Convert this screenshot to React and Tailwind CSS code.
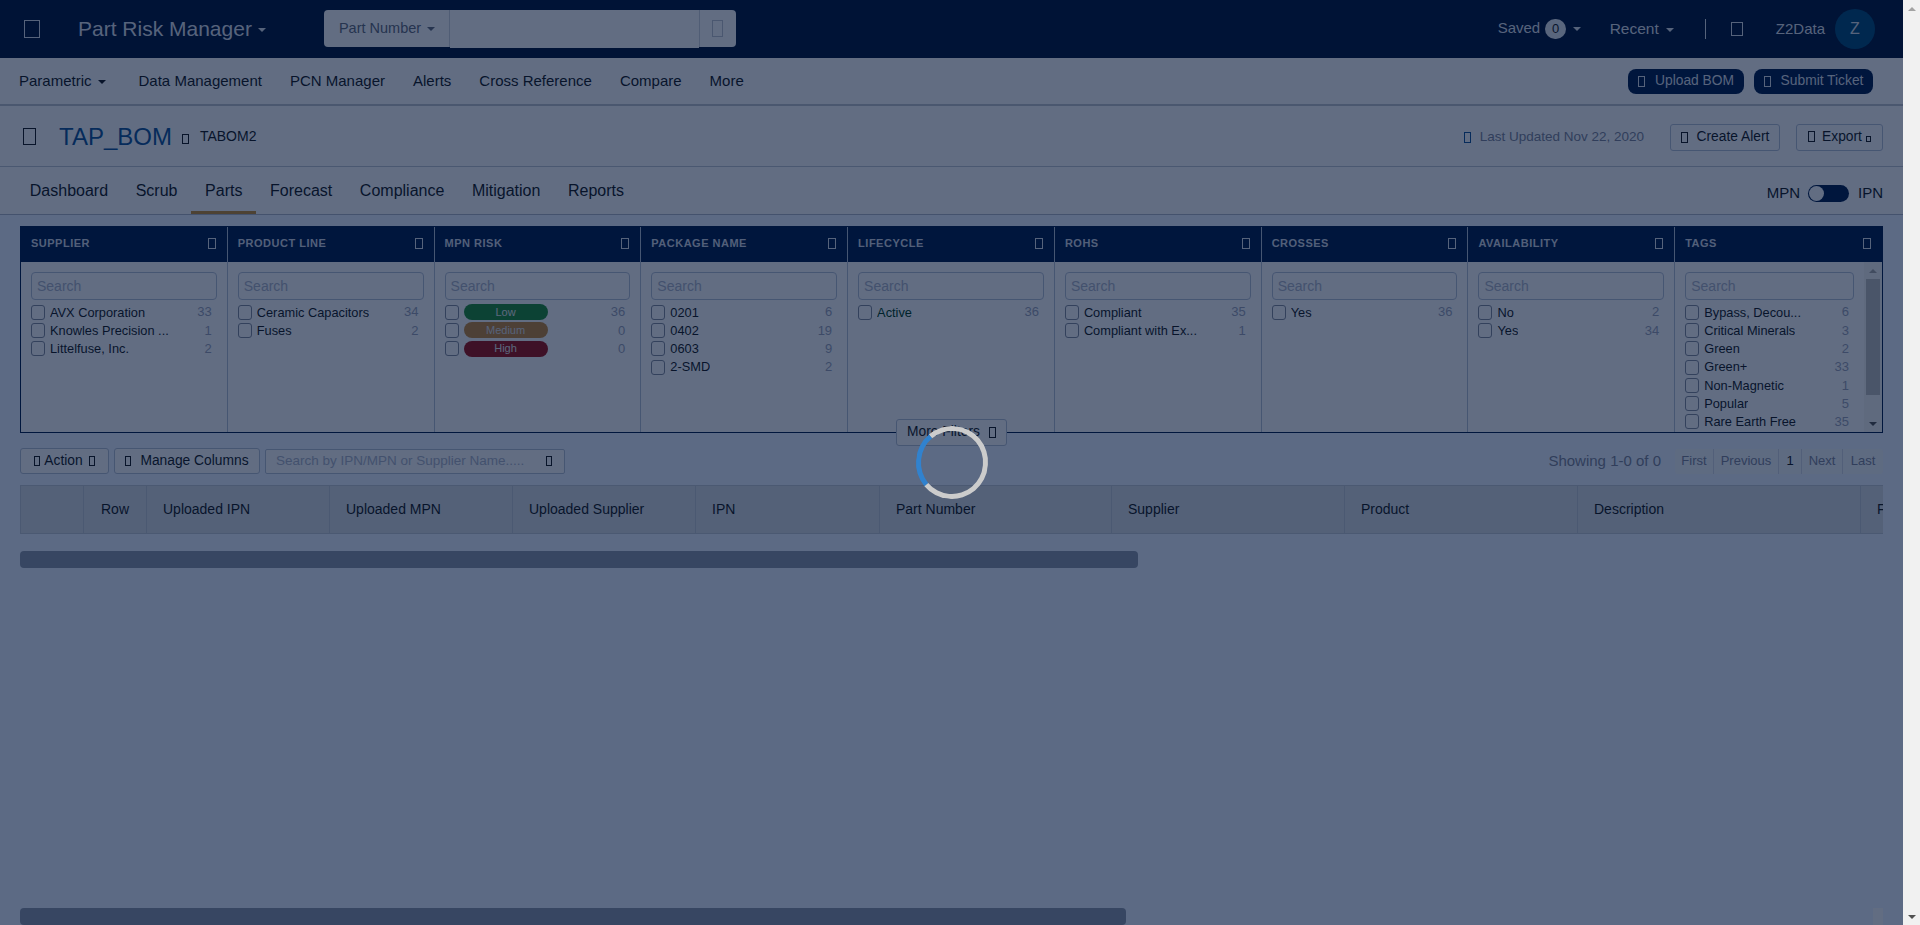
import React from "react";

const Tofu = ({ className = "" }) => (
    <span className={`inline-block shrink-0 border border-current ${className}`} />
);

const Caret = ({ className = "" }) => (
    <span className={`inline-block w-0 h-0 border-x-[4px] border-x-transparent border-t-[4px] border-t-current ${className}`} />
);

const navLinks = ["Data Management", "PCN Manager", "Alerts", "Cross Reference", "Compare", "More"];
const tabs = ["Dashboard", "Scrub", "Parts", "Forecast", "Compliance", "Mitigation", "Reports"];

const filters = [
    { title: "SUPPLIER", items: [["AVX Corporation", 33], ["Knowles Precision ...", 1], ["Littelfuse, Inc.", 2]] },
    { title: "PRODUCT LINE", items: [["Ceramic Capacitors", 34], ["Fuses", 2]] },
    {
        title: "MPN RISK",
        items: [
            ["Low", 36, "bg-[#1f8a35] text-[#e4e6ea]"],
            ["Medium", 0, "bg-[#c0853a] text-[#d8dae0]"],
            ["High", 0, "bg-[#9c1015] text-[#e0e2e6]"],
        ],
    },
    { title: "PACKAGE NAME", items: [["0201", 6], ["0402", 19], ["0603", 9], ["2-SMD", 2]] },
    { title: "LIFECYCLE", items: [["Active", 36]], green: true },
    { title: "ROHS", items: [["Compliant", 35], ["Compliant with Ex...", 1]] },
    { title: "CROSSES", items: [["Yes", 36]] },
    { title: "AVAILABILITY", items: [["No", 2], ["Yes", 34]] },
    {
        title: "TAGS",
        scroll: true,
        items: [
            ["Bypass, Decou...", 6],
            ["Critical Minerals", 3],
            ["Green", 2],
            ["Green+", 33],
            ["Non-Magnetic", 1],
            ["Popular", 5],
            ["Rare Earth Free", 35],
        ],
    },
];

const columns = [
    ["", "w-[63px]"],
    ["Row", "w-[63px] justify-center"],
    ["Uploaded IPN", "w-[183px] pl-[16px]"],
    ["Uploaded MPN", "w-[183px] pl-[16px]"],
    ["Uploaded Supplier", "w-[183px] pl-[16px]"],
    ["IPN", "w-[184px] pl-[16px]"],
    ["Part Number", "w-[232px] pl-[16px]"],
    ["Supplier", "w-[233px] pl-[16px]"],
    ["Product", "w-[233px] pl-[16px]"],
    ["Description", "w-[283px] pl-[16px]"],
    ["F", "w-[23px] pl-[16px]"],
];

const pages = [
    ["First", "w-[39px] text-[#7a8196]"],
    ["Previous", "w-[65px] text-[#7a8196]"],
    ["1", "w-[23px] text-[#15181c]"],
    ["Next", "w-[41px] text-[#7a8196]"],
    ["Last", "w-[40px] text-[#7a8196]"],
];

function FilterColumn({ filter, last }) {
    return (
        <div className={`flex min-w-0 flex-col ${last ? "" : "border-r border-[#b0bbd0]"}`}>
            <div className="flex h-[35px] shrink-0 items-center justify-between bg-[#001c4c] pb-[2px] pl-[10px] pr-[10px] text-[11px] font-bold tracking-[0.5px] text-[#ccd3e0]">
                <span>{filter.title}</span>
                <Tofu className="mr-[1px] h-[11px] w-[8px] text-[#d8dde6]" />
            </div>
            <div className="relative flex min-h-0 flex-1 overflow-hidden">
                <div className="min-w-0 flex-1 pl-[10px] pr-[10px] pt-[10px]">
                    <input
                        readOnly
                        placeholder="Search"
                        className="block h-[28px] w-full rounded-[4px] border border-[#b0bbd0] bg-transparent px-[5px] text-[14px] placeholder:text-[#a8afc4]"
                    />
                    <div className="mt-[3px]">
                        {filter.items.map(([label, count, badge]) => (
                            <div key={label} className="flex h-[18.3px] items-center">
                                <span className="h-[15px] w-[14px] shrink-0 rounded-[3px] border border-[#7f8799] bg-transparent" />
                                {badge ? (
                                    <span className={`ml-[5px] flex h-[16px] w-[84px] items-center justify-center rounded-full text-[11px] font-medium ${badge}`}>
                                        {label}
                                    </span>
                                ) : (
                                    <span className={`ml-[5px] truncate text-[12.8px] ${filter.green ? "text-[#003d20]" : "text-[#15181c]"}`}>
                                        {label}
                                    </span>
                                )}
                                <span className="ml-auto pl-1 pr-[5px] text-[13px] text-[#989eb5]">{count}</span>
                            </div>
                        ))}
                    </div>
                </div>
                {filter.scroll && (
                    <div className="flex w-[18px] shrink-0 flex-col items-center bg-[#eeeeee]">
                        <Caret className="mt-[7px] rotate-180 text-[#a3a3a3]" />
                        <div className="mt-[6px] h-[116px] w-[14px] bg-[#b8b8b8]" />
                        <Caret className="mt-auto mb-[6px] text-[#505050]" />
                    </div>
                )}
            </div>
        </div>
    );
}

export default function App() {
    return (
        <div className="relative flex h-[925px] overflow-hidden bg-[#f1f1f1] font-['Liberation_Sans',Arial,sans-serif]">
            <div className="relative h-full w-[1903px] shrink-0 overflow-hidden bg-[#e6eefd]">
                {/* top bar */}
                <header className="flex h-[58px] items-center bg-[#00153a] text-[#d8dde6]">
                    <Tofu className="ml-[24px] h-[18px] w-[16px]" />
                    <span className="ml-[38px] text-[21px]">Part Risk Manager</span>
                    <Caret className="ml-[6px] mt-[2px]" />
                    <div className="ml-[58px] mt-[10px] flex h-[37px] w-[412px] self-start">
                        <div className="flex w-[126px] items-center rounded-l-[4px] border-r border-[#c8cdd6] bg-[#f4f5f8] pl-[15px] text-[14.5px] text-[#5f6778]">
                            Part Number
                            <Caret className="ml-[6px] text-[#5f6778]" />
                        </div>
                        <div className="h-[38px] w-[249px] bg-[#f4f5f8]" />
                        <div className="flex w-[37px] items-center justify-center rounded-r-[4px] border-l border-[#c8cdd6] bg-[#f4f5f8]">
                            <Tofu className="h-[17px] w-[11px] text-[#b8bfca]" />
                        </div>
                    </div>
                    <div className="ml-auto flex items-center pr-[28px]">
                        <span className="mb-[2px] text-[15px]">Saved</span>
                        <span className="mb-[1px] ml-[5px] flex h-[20px] w-[21px] items-center justify-center rounded-full bg-[#dfe3ea] text-[13px] text-[#15181c]">0</span>
                        <Caret className="ml-[7px]" />
                        <span className="ml-[28.5px] text-[15.5px]">Recent</span>
                        <Caret className="ml-[7px] mt-[2px]" />
                        <span className="ml-[31px] h-[20px] w-px bg-[#d8dde6]" />
                        <Tofu className="ml-[25px] h-[14px] w-[12px]" />
                        <span className="ml-[33px] mt-[1px] text-[15px]">Z2Data</span>
                        <span className="ml-[10px] flex h-[40px] w-[40px] items-center justify-center rounded-full bg-[#004a78] text-[16px]">Z</span>
                    </div>
                </header>

                {/* main nav */}
                <nav className="flex h-[48px] items-center border-b-2 border-[#b8bdc8] bg-[#f4f5f8] pl-[19px] pr-[30px] pt-[1px] text-[15px] text-[#15181c]">
                    <span>Parametric</span>
                    <Caret className="ml-[6px]" />
                    <div className="ml-[33px] flex gap-[28px]">
                        {navLinks.map((link) => (
                            <span key={link}>{link}</span>
                        ))}
                    </div>
                    <div className="ml-auto flex gap-[10px] text-[13.8px] text-[#d8dde6]">
                        <span className="flex h-[25px] w-[116px] items-center justify-center gap-[10px] rounded-[8px] bg-[#001c4c]">
                            <Tofu className="h-[11px] w-[7px]" />
                            Upload BOM
                        </span>
                        <span className="flex h-[25px] w-[119px] items-center justify-center gap-[10px] rounded-[8px] bg-[#001c4c]">
                            <Tofu className="h-[11px] w-[7px]" />
                            Submit Ticket
                        </span>
                    </div>
                </nav>

                {/* title row */}
                <div className="flex h-[61px] items-center border-b border-[#b8c0cd] bg-[#f4f5f8] pl-[23px] pr-[20px] pt-[1px]">
                    <Tofu className="h-[17px] w-[13px] text-[#15181c]" />
                    <span className="ml-[23px] text-[24px] text-[#0f5296]">TAP_BOM</span>
                    <Tofu className="ml-[10px] mt-[4px] h-[10px] w-[7px] text-[#15181c]" />
                    <span className="ml-[11px] text-[14px] text-[#15181c]">TABOM2</span>
                    <Tofu className="ml-auto mt-[1px] h-[11px] w-[7px] text-[#0f5296]" />
                    <span className="ml-[9px] mt-[1px] text-[13.5px] text-[#7a8196]">Last Updated Nov 22, 2020</span>
                    <span className="ml-[26px] mt-[1px] flex h-[27px] w-[110px] items-center justify-center gap-[9px] rounded-[3px] border border-[#b0bbd0] text-[13.8px] text-[#15181c]">
                        <Tofu className="h-[11px] w-[7px]" />
                        Create Alert
                    </span>
                    <span className="ml-[16px] mt-[1px] flex h-[27px] w-[87px] items-center justify-center gap-[7px] rounded-[3px] border border-[#b0bbd0] text-[13.8px] text-[#15181c]">
                        <Tofu className="mb-[2px] h-[11px] w-[7px]" />
                        <span>Export</span>
                        <Tofu className="ml-[-3px] mt-[3px] h-[6px] w-[5px]" />
                    </span>
                </div>

                {/* tabs */}
                <div className="flex h-[48px] items-stretch border-b border-[#aab2c2] bg-[#f4f5f8] pl-[16px] pr-[20px] text-[16px] text-[#15181c]">
                    {tabs.map((tab) => (
                        <span
                            key={tab}
                            className={`flex items-center border-b-[3px] px-[13.8px] pt-[3px] ${tab === "Parts" ? "border-[#c08a35]" : "border-transparent"}`}
                        >
                            {tab}
                        </span>
                    ))}
                    <div className="ml-auto flex items-center pt-[5px] text-[15px]">
                        <span>MPN</span>
                        <span className="ml-[8px] flex h-[17px] w-[41px] items-center rounded-full bg-[#001c4c] pl-[1px]">
                            <span className="h-[15px] w-[15px] rounded-full bg-[#f4f5f8]" />
                        </span>
                        <span className="ml-[9px]">IPN</span>
                    </div>
                </div>

                <div className="px-[20px] pt-[11px]">
                    {/* filters */}
                    <div className="relative">
                        <div className="grid h-[207px] grid-cols-9 overflow-hidden border border-[#001c4c] bg-[#f4f5f8]">
                            {filters.map((filter, i) => (
                                <FilterColumn key={filter.title} filter={filter} last={i === filters.length - 1} />
                            ))}
                        </div>
                        <span className="absolute left-[876px] top-[193px] flex h-[27px] w-[111px] items-center justify-center gap-[9px] rounded-[3px] border border-[#b0bbd0] bg-[#f4f5f8] text-[13.8px] text-[#15181c]">
                            More Filters
                            <Tofu className="h-[11px] w-[7px]" />
                        </span>
                    </div>

                    {/* table toolbar */}
                    <div className="mt-[15px] flex items-center">
                        <span className="flex h-[26px] w-[89px] items-center justify-center gap-[4px] rounded-[3px] border border-[#b0bbd0] bg-[#f4f5f8] text-[13.8px] text-[#15181c]">
                            <Tofu className="h-[10px] w-[6px]" />
                            Action
                            <Tofu className="ml-[2px] h-[10px] w-[6px]" />
                        </span>
                        <span className="ml-[5px] flex h-[26px] w-[146px] items-center justify-center gap-[9px] rounded-[3px] border border-[#b0bbd0] bg-[#f4f5f8] text-[13.8px] text-[#15181c]">
                            <Tofu className="h-[10px] w-[6px]" />
                            Manage Columns
                        </span>
                        <div className="ml-[5px] flex h-[25px] w-[300px] items-center justify-between rounded-[2px] border border-[#b0bbd0] bg-[#f4f5f8] pl-[10px] pr-[12px] text-[13.5px] text-[#a8afc4]">
                            Search by IPN/MPN or Supplier Name.....
                            <Tofu className="h-[10px] w-[6px] text-[#15181c]" />
                        </div>
                        <span className="ml-auto mt-[1px] text-[15px] text-[#7a8196]">Showing 1-0 of 0</span>
                        <div className="ml-[14px] flex h-[25px] w-[208px] overflow-hidden rounded-[3px] bg-[#eceff6] text-[13px]">
                            {pages.map(([label, cls], i) => (
                                <span key={label} className={`flex items-center justify-center ${i < 4 ? "border-r border-[#ccd3e2]" : ""} ${cls}`}>
                                    {label}
                                </span>
                            ))}
                        </div>
                    </div>

                    {/* table header */}
                    <div className="mt-[11px] flex h-[49px] overflow-hidden border-y border-[#bcc3d0] bg-[#d2d7de] text-[14px] text-[#15181c]">
                        {columns.map(([label, cls], i) => (
                            <div key={i} className={`flex shrink-0 items-center overflow-hidden border-l border-[#bcc3d0] ${cls}`}>
                                {label}
                            </div>
                        ))}
                    </div>

                    <div className="mt-[17px] h-[17px] w-[1118px] rounded-[4px] bg-[#8a94a8]" />
                </div>

                {/* page level horizontal scrollbar */}
                <div className="absolute bottom-0 left-[20px] h-[17px] w-[1106px] rounded-[4px] bg-[#8a94a8]" />
                <div className="absolute bottom-0 left-[1873px] h-[17px] w-[10px] bg-[#f4f5f8]" />

                {/* loading overlay */}
                <div className="absolute inset-0 bg-[rgba(0,18,51,0.6)]" />
                <div className="absolute left-[916px] top-[426px] h-[73px] w-[72px] rotate-[5deg] rounded-full border-[5px] border-[#cccccc] border-l-[#3182ce]" />
            </div>

            {/* page scrollbar */}
            <div className="flex w-[17px] shrink-0 flex-col items-center bg-[#f1f1f1]">
                <Caret className="mt-[7px] rotate-180 text-[#a3a3a3]" />
                <Caret className="mt-auto mb-[6px] text-[#505050]" />
            </div>
        </div>
    );
}
